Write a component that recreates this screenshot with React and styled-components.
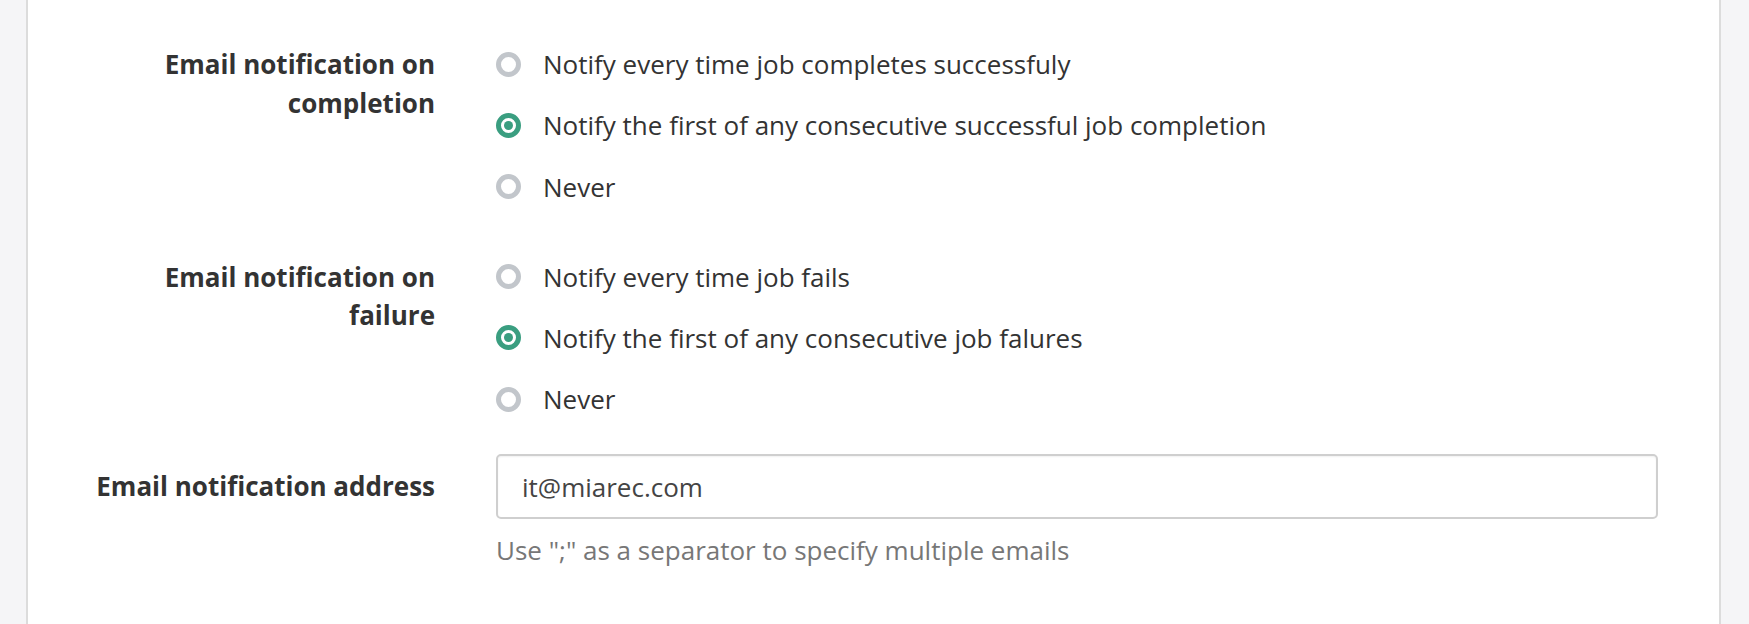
import React from 'react'
import styled, { createGlobalStyle } from 'styled-components'

const GlobalStyle = createGlobalStyle`
  html, body {
    margin: 0;
    padding: 0;
    background: #f5f5f7;
  }
  body {
    font-family: 'Open Sans', 'Noto Sans', sans-serif;
    color: #333;
  }
`

const Page = styled.div`
  display: flex;
  height: 624px;
  padding: 0 28px 0 26px;
  background: #f5f5f7;
  overflow: hidden;
`

const Panel = styled.div`
  flex: 1;
  background: #fff;
  border-left: 2px solid #dcdcdc;
  border-right: 2px solid #dcdcdc;
  padding-top: 45px;
`

const Form = styled.div`
  display: grid;
  grid-template-columns: 407px 1162px;
  column-gap: 61px;
`

const Label = styled.div`
  text-align: right;
  font-weight: 700;
  font-size: 26px;
  line-height: 38.5px;
  color: #333;
  margin-bottom: ${p => p.$mb || 0}px;
`

const Controls = styled.div`
  margin-bottom: ${p => p.$mb || 0}px;
`

const Option = styled.label`
  display: flex;
  align-items: center;
  height: 38px;
  font-size: 26px;
  color: #333;
  & + & {
    margin-top: 23.3px;
  }
`

const Radio = styled.span`
  box-sizing: border-box;
  width: 25px;
  height: 25px;
  border-radius: 50%;
  border: 5px solid ${p => (p.$checked ? '#3a9e80' : '#c2c6cb')};
  margin-right: 22px;
  display: flex;
  align-items: center;
  justify-content: center;
  flex-shrink: 0;
  &::after {
    content: '';
    width: 9px;
    height: 9px;
    border-radius: 50%;
    background: ${p => (p.$checked ? '#3a9e80' : 'transparent')};
  }
`

const InputLabel = styled(Label)`
  display: flex;
  align-items: center;
  justify-content: flex-end;
  height: 65px;
`

const Input = styled.div`
  box-sizing: border-box;
  height: 65px;
  border: 2px solid #cfcfcf;
  border-radius: 5px;
  box-shadow: inset 0 1px 2px rgba(0, 0, 0, 0.06);
  display: flex;
  align-items: center;
  padding-left: 24px;
  font-size: 26px;
  color: #444;
`

const Help = styled.div`
  margin-top: 14px;
  font-size: 26px;
  line-height: 34px;
  color: #777;
`

const groups = [
  {
    label: ['Email notification on', 'completion'],
    options: [
      'Notify every time job completes successfuly',
      'Notify the first of any consecutive successful job completion',
      'Never'
    ],
    checked: 1
  },
  {
    label: ['Email notification on', 'failure'],
    options: [
      'Notify every time job fails',
      'Notify the first of any consecutive job falures',
      'Never'
    ],
    checked: 1
  }
]

export default function App () {
  return (
    <>
      <GlobalStyle />
      <Page>
        <Panel>
          <Form>
            {groups.map((g, gi) => (
              <React.Fragment key={gi}>
                <Label $mb={gi === 0 ? 52 : 36}>
                  {g.label[0]}
                  <br />
                  {g.label[1]}
                </Label>
                <Controls $mb={gi === 0 ? 52 : 36}>
                  {g.options.map((o, oi) => (
                    <Option key={oi}>
                      <Radio $checked={oi === g.checked} />
                      {o}
                    </Option>
                  ))}
                </Controls>
              </React.Fragment>
            ))}
            <InputLabel>Email notification address</InputLabel>
            <Controls>
              <Input>it@miarec.com</Input>
              <Help>Use ";" as a separator to specify multiple emails</Help>
            </Controls>
          </Form>
        </Panel>
      </Page>
    </>
  )
}
